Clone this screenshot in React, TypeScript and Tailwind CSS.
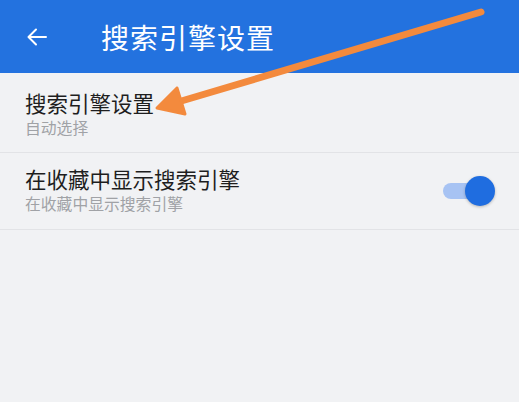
import { useState } from "react";

const FONT = {
  fontFamily: '"Noto Sans CJK SC", "Noto Sans", sans-serif',
};

function BackArrow() {
  return (
    <svg width="20" height="18" viewBox="0 0 20 18" fill="none">
      <path
        d="M19 9H2M9 1.5L1.5 9L9 16.5"
        stroke="white"
        strokeWidth="2"
        strokeLinecap="round"
        strokeLinejoin="round"
      />
    </svg>
  );
}

function Toggle({ on, onChange }: { on: boolean; onChange: () => void }) {
  return (
    <button onClick={onChange} className="relative w-[52px] h-[30px] shrink-0">
      <div
        className={`absolute left-0 right-[8px] top-[7px] h-[16px] rounded-full ${
          on ? "bg-[#a7c3f3]" : "bg-[#c9cbd0]"
        }`}
      />
      <div
        className={`absolute top-0 w-[30px] h-[30px] rounded-full shadow-[0_1px_3px_rgba(0,0,0,0.25)] ${
          on ? "right-0 bg-[#1f6de0]" : "left-0 bg-white"
        }`}
      />
    </button>
  );
}

export default function App() {
  const [showInFav, setShowInFav] = useState(true);

  return (
    <div className="relative w-[519px] h-[402px] overflow-hidden bg-[#f1f2f4]" style={FONT}>
      {/* Header */}
      <header className="h-[73px] bg-[#2372df] flex items-center pl-[27px]">
        <BackArrow />
        <h1 className="ml-[54px] text-[28px] leading-[34px] text-white tracking-[1px]">
          搜索引擎设置
        </h1>
      </header>

      {/* Search engine row */}
      <div className="h-[80px] px-[25px] pt-[17px] border-b border-[#e2e3e6]">
        <div className="text-[21.5px] leading-[26px] text-[#1e1e1e]">搜索引擎设置</div>
        <div className="mt-[2px] text-[15.8px] leading-[20px] text-[#a0a2a6]">自动选择</div>
      </div>

      {/* Show in favourites row */}
      <div className="h-[77px] pl-[25px] pr-[24px] flex items-center justify-between border-b border-[#e2e3e6]">
        <div className="-mt-[2px]">
          <div className="text-[21.5px] leading-[26px] text-[#1e1e1e]">在收藏中显示搜索引擎</div>
          <div className="mt-[2px] text-[15.8px] leading-[20px] text-[#a0a2a6]">在收藏中显示搜索引擎</div>
        </div>
        <Toggle on={showInFav} onChange={() => setShowInFav(!showInFav)} />
      </div>

      {/* Annotation arrow */}
      <svg
        className="absolute inset-0 pointer-events-none"
        width="519"
        height="402"
        viewBox="0 0 519 402"
      >
        <line
          x1="481"
          y1="12"
          x2="178"
          y2="102"
          stroke="#f38a3d"
          strokeWidth="7"
          strokeLinecap="round"
        />
        <polygon
          points="157,108 185,114 177,88"
          fill="#f38a3d"
          stroke="#f38a3d"
          strokeWidth="3"
          strokeLinejoin="round"
        />
      </svg>
    </div>
  );
}
